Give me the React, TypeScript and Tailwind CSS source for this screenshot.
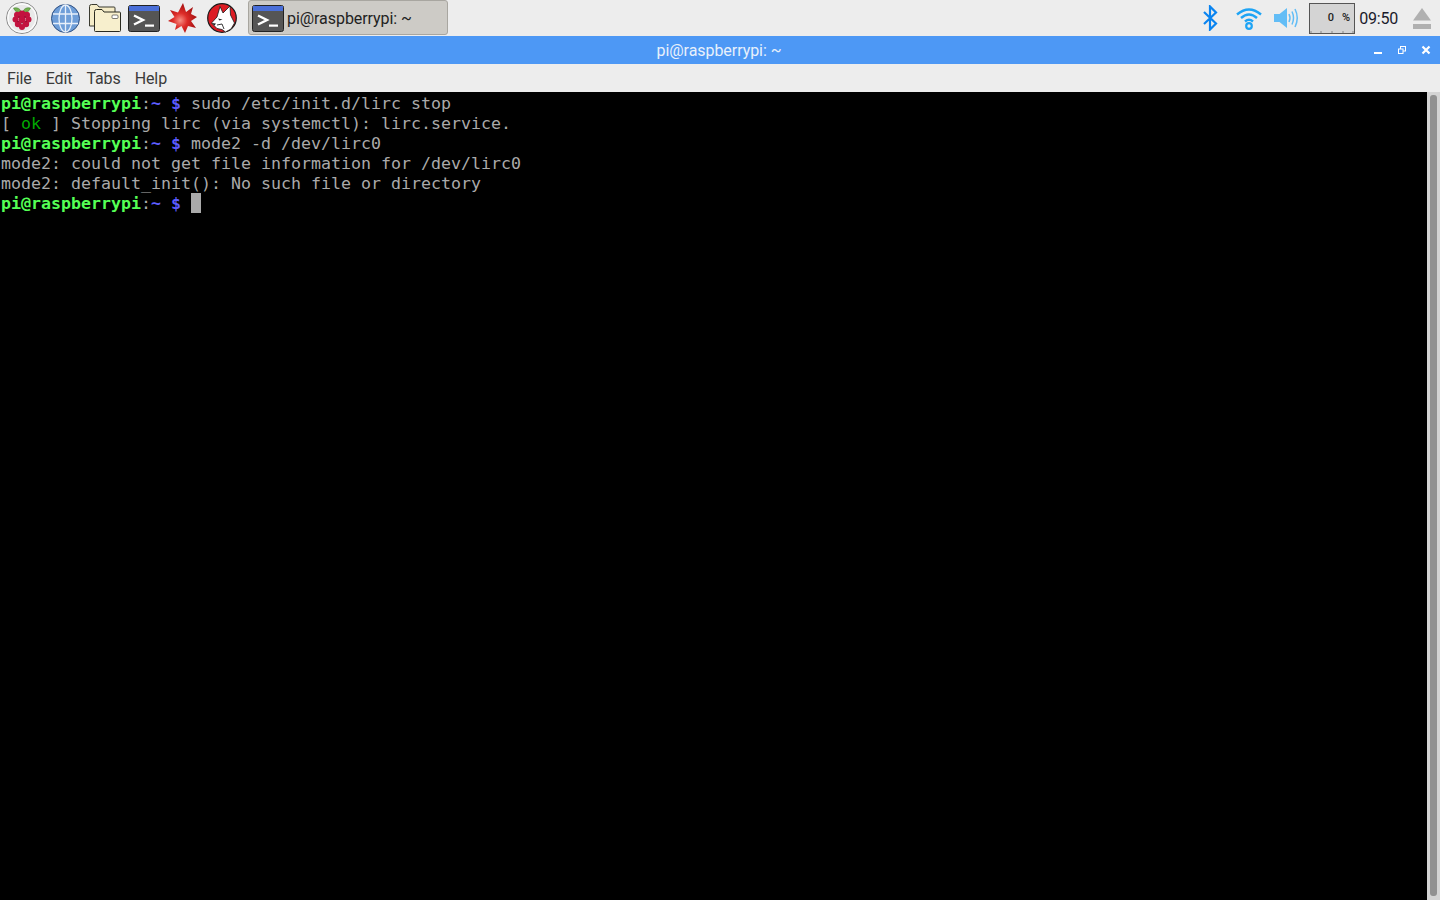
import React from "react";

const Term = () => (
  <svg width="32" height="27" viewBox="0 0 32 27">
    <rect x="0.5" y="0.5" width="31" height="26" rx="2" fill="#555" stroke="#222" />
    <rect x="1" y="1" width="30" height="5" fill="#4a6fd8" />
    <path d="M6 10.5 L15 15 L6 19.5" fill="none" stroke="#fff" strokeWidth="2.4" />
    <rect x="17" y="19.5" width="9" height="2.2" fill="#fff" />
  </svg>
);

const Raspberry = () => (
  <svg width="32" height="32" viewBox="0 0 32 32">
    <circle cx="16" cy="16" r="15.5" fill="#e9e9e9" stroke="#8a8a8a" />
    <circle cx="16" cy="16" r="14" fill="none" stroke="#fbfbfb" strokeWidth="1.4" />
    <path d="M7.5 6 Q13 4.5 15.5 10 Q10 12 7.5 6Z M24.5 6 Q19 4.5 16.5 10 Q22 12 24.5 6Z" fill="#74b04f" stroke="#3f7a2c" strokeWidth="0.5" />
    <g fill="#c2133f">
      <circle cx="16" cy="12" r="3.6" /><circle cx="11.2" cy="13" r="3.2" /><circle cx="20.8" cy="13" r="3.2" />
      <circle cx="9.5" cy="17.5" r="3" /><circle cx="22.5" cy="17.5" r="3" /><circle cx="16" cy="17.5" r="3.4" />
      <circle cx="12" cy="22" r="3.2" /><circle cx="20" cy="22" r="3.2" /><circle cx="16" cy="25" r="3" />
    </g>
    <g fill="#8c0f30">
      <circle cx="13" cy="15" r="0.8" /><circle cx="19" cy="15" r="0.8" /><circle cx="16" cy="21" r="0.8" /><circle cx="12" cy="19.5" r="0.7" /><circle cx="20" cy="19.5" r="0.7" />
    </g>
  </svg>
);

const Globe = () => (
  <svg width="29" height="29" viewBox="0 0 29 29">
    <circle cx="14.5" cy="14.5" r="14" fill="#6f9ed8" stroke="#2f4f80" />
    <g fill="none" stroke="#e8f0fa" strokeWidth="1.3">
      <ellipse cx="14.5" cy="14.5" rx="6.5" ry="13.5" />
      <path d="M14.5 1 V28 M2 10 H27 M2 19.5 H27" />
    </g>
  </svg>
);

const Folders = () => (
  <svg width="32" height="28" viewBox="0 0 32 28">
    <path d="M0.5 2.5 Q0.5 0.5 2.5 0.5 H8 L10 3 H25 Q26 3 26 4 V22 H0.5Z" fill="#f5ecc8" stroke="#3a3a30" />
    <path d="M5.5 7.5 Q5.5 5.5 7.5 5.5 H13 L15 8 H30.5 Q31.5 8 31.5 9 V26.5 Q31.5 27.5 30.5 27.5 H6.5 Q5.5 27.5 5.5 26.5Z" fill="#f7efcd" stroke="#2a2a20" />
    <rect x="23" y="11" width="6" height="3.5" rx="1" fill="#fff" stroke="#444" strokeWidth="0.7" />
  </svg>
);

const spikes: [number, number][] = [
  [15, 0], [18, 9], [25, 4], [23, 11], [29, 14], [23, 18], [28, 25], [20, 23], [17, 30], [13.5, 23], [7, 27], [8.5, 21], [0, 18], [6.5, 14], [2, 7], [10, 9.5],
];

const Mathematica = () => (
  <svg width="29" height="30" viewBox="0 0 29 30">
    <defs>
      <radialGradient id="m" cx="0.42" cy="0.58" r="0.55">
        <stop offset="0" stopColor="#f78f84" /><stop offset="0.45" stopColor="#dd2c28" /><stop offset="1" stopColor="#a81212" />
      </radialGradient>
    </defs>
    <polygon points={spikes.map((p) => p.join(",")).join(" ")} fill="url(#m)" />
  </svg>
);

const Wolf = () => (
  <svg width="30" height="30" viewBox="0 0 30 30">
    <circle cx="15" cy="15" r="14.3" fill="#dd1c24" stroke="#1a1a1a" strokeWidth="1.2" />
    <path d="M13 3.5 L16 10 L23 3 L23.5 12 L27.5 20 L24 26 L18.5 29 L15 26.5 L10 25.5 L4.5 20 L10 14 Z" fill="#fff" stroke="#1a1a1a" strokeWidth="0.8" />
    <path d="M4.5 20 L9 20.5 L7.5 22.5Z M11 15.5 L15.5 16.5 L12.5 17.5Z" fill="#222" />
    <path d="M10 22 L15 21 L17 26" fill="none" stroke="#222" strokeWidth="0.9" />
  </svg>
);

const Bluetooth = () => (
  <svg width="15" height="26" viewBox="0 0 15 26">
    <path d="M1 7 L13 18.5 L7 24.5 V1.5 L13 7.5 L1 19" fill="none" stroke="#0a84f0" strokeWidth="2.2" />
  </svg>
);

const Wifi = () => (
  <svg width="26" height="23" viewBox="0 0 26 23">
    <g fill="none" stroke="#1ea4f5" strokeWidth="2.4">
      <path d="M1 7.5 Q13 -2.5 25 7.5" />
      <path d="M5 11 Q13 4 21 11" />
      <path d="M9 14.5 Q13 11 17 14.5" />
    </g>
    <circle cx="13" cy="19" r="2.8" fill="none" stroke="#1ea4f5" strokeWidth="2.2" />
  </svg>
);

const Volume = () => (
  <svg width="26" height="20" viewBox="0 0 26 20">
    <path d="M0 6 H5.5 L13 0 V20 L5.5 14 H0Z" fill="#62bdf6" />
    <g fill="none" stroke="#62bdf6" strokeWidth="1.5">
      <path d="M15 6 Q17 10 15 14" />
      <path d="M18 3.5 Q21 10 18 16.5" />
      <path d="M21 1 Q25.5 10 21 19" />
    </g>
  </svg>
);

const Eject = () => (
  <svg width="18" height="21" viewBox="0 0 18 21">
    <path d="M9 0 L18 12.6 H0Z" fill="#b0b0b0" />
    <rect x="0" y="16" width="18" height="5" fill="#b0b0b0" />
  </svg>
);

const Prompt = () => (
  <>
    <span className="font-bold text-[#55ff55]">pi@raspberrypi</span>
    <span>:</span>
    <span className="font-bold text-[#5c5cff]">~ $</span>
    <span> </span>
  </>
);

export default function App() {
  return (
    <div className="flex h-[900px] w-[1440px] flex-col overflow-hidden bg-black font-['Roboto',sans-serif]">
      <header className="flex h-9 shrink-0 items-center bg-[#ededed]">
        <div className="ml-[6px]"><Raspberry /></div>
        <div className="ml-[13px]"><Globe /></div>
        <div className="ml-[9px]"><Folders /></div>
        <div className="ml-[7px] mt-[1px]"><Term /></div>
        <div className="ml-[8px]"><Mathematica /></div>
        <div className="ml-[10px]"><Wolf /></div>
        <div className="ml-[11px] flex h-[35px] w-[200px] items-center gap-[3px] self-start rounded-[3px] border border-[#a8a6a0] bg-[#cdcbc6] pl-[3px] text-[16px] tracking-[-0.06px] text-[#222]">
          <div className="mt-[1px]"><Term /></div>
          <span className="pt-[2px]">pi@raspberrypi: ~</span>
        </div>
        <div className="ml-auto flex items-center">
          <Bluetooth />
          <div className="ml-[18px]"><Wifi /></div>
          <div className="ml-[12px]"><Volume /></div>
          <div className="relative ml-[9px] flex h-[31px] w-[46px] items-center justify-end gap-[8px] border border-[#555] bg-[#d4d4d4] pr-[4px] text-[11px] font-medium text-[#222]">
            <span>0</span><span>%</span>
            <svg className="absolute bottom-0 left-0" width="44" height="2" viewBox="0 0 44 2">
              <path d="M1 0V2M11 0V2M22 0V2M33 0V2M43 0V2" stroke="#888" strokeWidth="1" />
            </svg>
          </div>
          <span className="ml-[4px] pt-[2px] text-[16px] tracking-[-0.2px] text-[#1a1a2a]">09:50</span>
          <div className="ml-[15px] mr-[9px] mt-[1px]"><Eject /></div>
        </div>
      </header>

      <div className="relative flex h-7 shrink-0 items-center justify-center bg-[#4d98f5] pt-[2px] text-[16px] tracking-[-0.06px] text-[#e8f0fb]">
        <span className="ml-[-2px]">pi@raspberrypi: ~</span>
        <div className="absolute right-[9px] top-0 flex h-7 items-center gap-[14px]">
          <svg width="10" height="10" viewBox="0 0 10 10"><rect x="1" y="7" width="8" height="2" fill="#fff" /></svg>
          <svg width="10" height="10" viewBox="0 0 10 10" fill="none" stroke="#fff" strokeWidth="1"><rect x="3.5" y="1.5" width="5" height="4.5" /><rect x="1.5" y="4" width="4.5" height="4.5" fill="#4d98f5" /></svg>
          <svg width="10" height="10" viewBox="0 0 10 10"><path d="M1.5 1.5 L8.5 8.5 M8.5 1.5 L1.5 8.5" stroke="#fff" strokeWidth="2.2" /></svg>
        </div>
      </div>

      <nav className="flex h-7 shrink-0 items-center gap-[14px] bg-[#ededed] pl-[7px] pt-[2px] text-[16px] tracking-[-0.1px] text-[#3a3a3a]">
        <span>File</span><span>Edit</span><span>Tabs</span><span>Help</span>
      </nav>

      <main className="flex min-h-0 flex-1">
        <pre className="min-w-0 flex-1 bg-black pl-[1px] pt-[2px] font-['DejaVu_Sans_Mono',monospace] text-[16.61px] leading-[20px] text-[#aaaaaa]">
          <div><Prompt />sudo /etc/init.d/lirc stop</div>
          <div>[ <span className="text-[#00aa00]">ok</span> ] Stopping lirc (via systemctl): lirc.service.</div>
          <div><Prompt />mode2 -d /dev/lirc0</div>
          <div>mode2: could not get file information for /dev/lirc0</div>
          <div>mode2: default_init(): No such file or directory</div>
          <div className="flex"><span><Prompt /></span><span className="mt-[-1px] h-5 w-[10px] bg-[#aaaaaa]" /></div>
        </pre>
        <div className="w-[13px] shrink-0 bg-[#d4d4d4] pb-[4px] pl-[3px] pr-[3px] pt-[3px]">
          <div className="h-full w-[7px] rounded-[3px] bg-[#919191]" />
        </div>
      </main>
    </div>
  );
}
